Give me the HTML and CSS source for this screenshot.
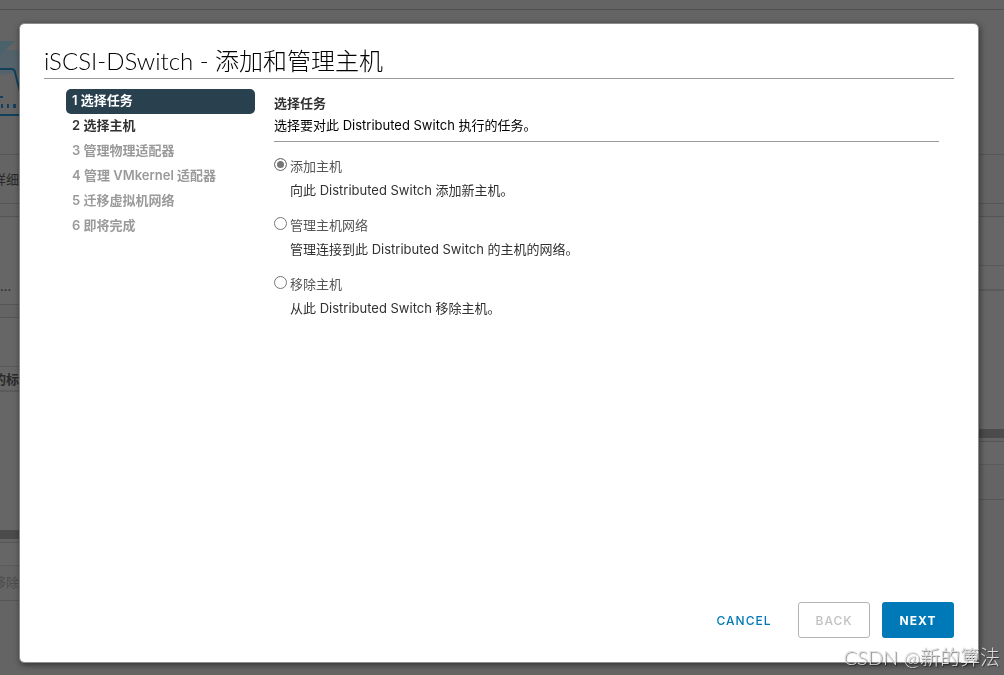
FILE: index.html
```html
<!DOCTYPE html>
<html lang="zh-CN">
<head>
    <meta charset="UTF-8">
    <meta name="viewport" content="width=device-width, initial-scale=1.0">
    <title>iSCSI-DSwitch - 添加和管理主机</title>
    <link rel="stylesheet" href="styles.css">
</head>
<body>
    <!-- Dimmed page behind the dialog -->
    <div class="page">
        <div class="page-header"></div>
        <div class="page-columns">
            <div class="column">
                <div class="banner">
                    <svg width="20" height="76" viewBox="0 0 20 76">
                        <path d="M0 0H15L0 15Z" fill="#4b626c"/>
                        <path d="M0 15L6 9H20V32L0 34Z" fill="#54636b"/>
                        <path d="M0 28H12Q14 28 15 31L20 51M0 56H3M0 74H20" fill="none" stroke="#10405c" stroke-width="2"/>
                        <path d="M1 63h2v4H1zM7 63h2v4H7zM13 63h3v4h-3z" fill="#10405c"/>
                    </svg>
                </div>
                <div class="tab-row"><span>详细</span></div>
                <div class="card info-card"><span>...</span></div>
                <div class="card list-card">
                    <div class="list-title"></div>
                    <div class="list-head"><span>的标</span></div>
                    <div class="list-body"></div>
                </div>
                <div class="scrollbar"></div>
                <div class="card pager"></div>
                <div class="action-row"><span>移除</span></div>
            </div>
            <div class="column">
                <div class="banner"></div>
                <div class="tab-row"></div>
                <div class="card side-card">
                    <div class="list-title"></div>
                    <div class="list-head"></div>
                    <div class="list-body"></div>
                </div>
                <div class="scrollbar"></div>
                <div class="card pager"></div>
                <div class="action-row"></div>
            </div>
        </div>
    </div>

    <div class="overlay">
        <div class="modal" role="dialog" aria-labelledby="modal-title">
            <h1 id="modal-title">iSCSI-DSwitch - 添加和管理主机</h1>
            <div class="wizard">
                <ol class="steps">
                    <li class="step active">1 选择任务</li>
                    <li class="step next">2 选择主机</li>
                    <li class="step">3 管理物理适配器</li>
                    <li class="step">4 管理 VMkernel 适配器</li>
                    <li class="step">5 迁移虚拟机网络</li>
                    <li class="step">6 即将完成</li>
                </ol>
                <div class="content">
                    <div class="content-header">
                        <h2>选择任务</h2>
                        <p>选择要对此 Distributed Switch 执行的任务。</p>
                    </div>
                    <div class="option">
                        <input type="radio" name="task" id="task-add" checked>
                        <label for="task-add">添加主机</label>
                        <p>向此 Distributed Switch 添加新主机。</p>
                    </div>
                    <div class="option">
                        <input type="radio" name="task" id="task-manage">
                        <label for="task-manage">管理主机网络</label>
                        <p>管理连接到此 Distributed Switch 的主机的网络。</p>
                    </div>
                    <div class="option">
                        <input type="radio" name="task" id="task-remove">
                        <label for="task-remove">移除主机</label>
                        <p>从此 Distributed Switch 移除主机。</p>
                    </div>
                </div>
            </div>
            <div class="buttons">
                <button type="button" class="btn btn-link">CANCEL</button>
                <button type="button" class="btn btn-outline" disabled>BACK</button>
                <button type="button" class="btn btn-primary">NEXT</button>
            </div>
            <svg class="resize-handle" width="10" height="10" viewBox="0 0 10 10">
                <path d="M1 9L9 1M4 9L9 4M7 9L9 7" stroke="#333" stroke-dasharray="1 1" fill="none"/>
            </svg>
        </div>
    </div>
    <div class="watermark">CSDN @新的算法</div>
</body>
</html>
```

FILE: styles.css
```css
* {
    box-sizing: border-box;
}
body {
    margin: 0;
    font-family: Inter, "Noto Sans CJK SC", sans-serif;
    font-size: 13px;
    line-height: 24px;
    color: #565656;
    background-color: #646464;
}
h1, h2, p, ol {
    margin: 0;
    padding: 0;
}

/* page behind */
.page {
    height: 100vh;
    overflow: hidden;
    color: #2a2a2a;
}
.page-header {
    height: 10px;
    border-bottom: 1px solid #505050;
}
.page-columns {
    display: grid;
    grid-template-columns: 1fr 1fr;
}
.column {
    overflow: hidden;
}
.banner {
    height: 145px;
    padding-top: 31px;
    border-bottom: 1px solid #575757;
}
.banner svg {
    display: block;
}
.tab-row {
    display: flex;
    align-items: center;
    height: 49px;
    margin-bottom: 12px;
    border-bottom: 1px solid #555;
}
.tab-row span,
.list-head span,
.action-row span {
    margin-left: -7px;
}
.card {
    border-top: 1px solid #555;
    background-color: #666;
}
.info-card {
    display: flex;
    align-items: flex-end;
    height: 89px;
    margin-bottom: 12px;
    padding-bottom: 6px;
    border-bottom: 1px solid #555;
}
.list-title {
    height: 49px;
    border-bottom: 1px solid #595959;
}
.list-head {
    display: flex;
    align-items: center;
    height: 25px;
    font-weight: 700;
    border-bottom: 2px solid #5a5a5a;
}
.list-body {
    height: 138px;
}
.scrollbar {
    height: 9px;
    margin-bottom: 3px;
    background-color: #4b4b4b;
}
.pager {
    height: 24px;
    border-bottom: 1px solid #5a5a5a;
}
.action-row {
    display: flex;
    align-items: center;
    height: 35px;
    padding-bottom: 3px;
    color: #4d4d4d;
    border-bottom: 1px solid #555;
}

/* dialog */
.overlay {
    position: fixed;
    inset: 0;
    display: flex;
    padding: 23px 25px 12px 19px;
}
.modal {
    position: relative;
    flex: 1;
    display: flex;
    flex-direction: column;
    padding: 22px 24px 24px;
    background-color: #fff;
    background-clip: padding-box;
    border: 1px solid #8c8c8c;
    border-radius: 5px;
    box-shadow: 1px 2px 6px rgba(0, 0, 0, 0.5);
}
h1 {
    height: 33px;
    font-family: Lato, "Noto Sans CJK SC", sans-serif;
    font-size: 24px;
    line-height: 30px;
    font-weight: 300;
    color: #000;
    border-bottom: 1px solid #9a9a9a;
}
.wizard {
    flex: 1;
    display: flex;
    gap: 19px;
    padding: 10px 15px 0 22px;
}
.steps {
    width: 189px;
    list-style: none;
}
.step {
    height: 25px;
    padding-left: 6px;
    line-height: 23px;
    font-weight: 600;
    color: #9a9a9a;
}
.step.next {
    color: #313131;
}
.step.active {
    color: #fff;
    background-color: #29404f;
    border-radius: 5px;
}
.content {
    flex: 1;
}
.content-header {
    height: 53px;
    margin-bottom: 12px;
    padding-top: 3px;
    line-height: 22px;
    color: #000;
    border-bottom: 1px solid #9a9a9a;
}
h2 {
    font-size: 13px;
    font-weight: 600;
    color: #313131;
}
.option {
    display: grid;
    grid-template-columns: 13px 1fr;
    column-gap: 3px;
    margin-bottom: 11px;
}
.option input {
    appearance: none;
    width: 13px;
    height: 13px;
    margin: 4px 0;
    border: 1px solid #767676;
    border-radius: 50%;
    background-color: #fff;
}
.option input:checked {
    background-color: #767676;
    box-shadow: inset 0 0 0 2px #fff;
}
.option p {
    grid-column: 2;
    color: #313131;
}
.buttons {
    display: flex;
    justify-content: flex-end;
    gap: 12px;
}
.btn {
    min-width: 72px;
    height: 36px;
    padding: 0;
    font-family: inherit;
    font-size: 12px;
    font-weight: 500;
    letter-spacing: 1px;
    border: 1px solid transparent;
    border-radius: 3px;
    background-color: #fff;
    cursor: pointer;
}
.btn-link {
    min-width: 84px;
    color: #0079b8;
}
.btn-outline {
    color: #c1c1c1;
    border-color: #b3b3b3;
}
.btn-primary {
    font-weight: 700;
    color: #fff;
    background-color: #0079b8;
}
.resize-handle {
    position: absolute;
    right: 2px;
    bottom: 2px;
}
.watermark {
    position: fixed;
    right: 4px;
    bottom: 4px;
    font-size: 20px;
    line-height: 28px;
    font-weight: 300;
    font-family: Lato, "Noto Sans CJK SC", sans-serif;
    color: #dcdcdc;
    text-shadow: 1px 1px 1px rgba(0, 0, 0, 0.5);
}
```
